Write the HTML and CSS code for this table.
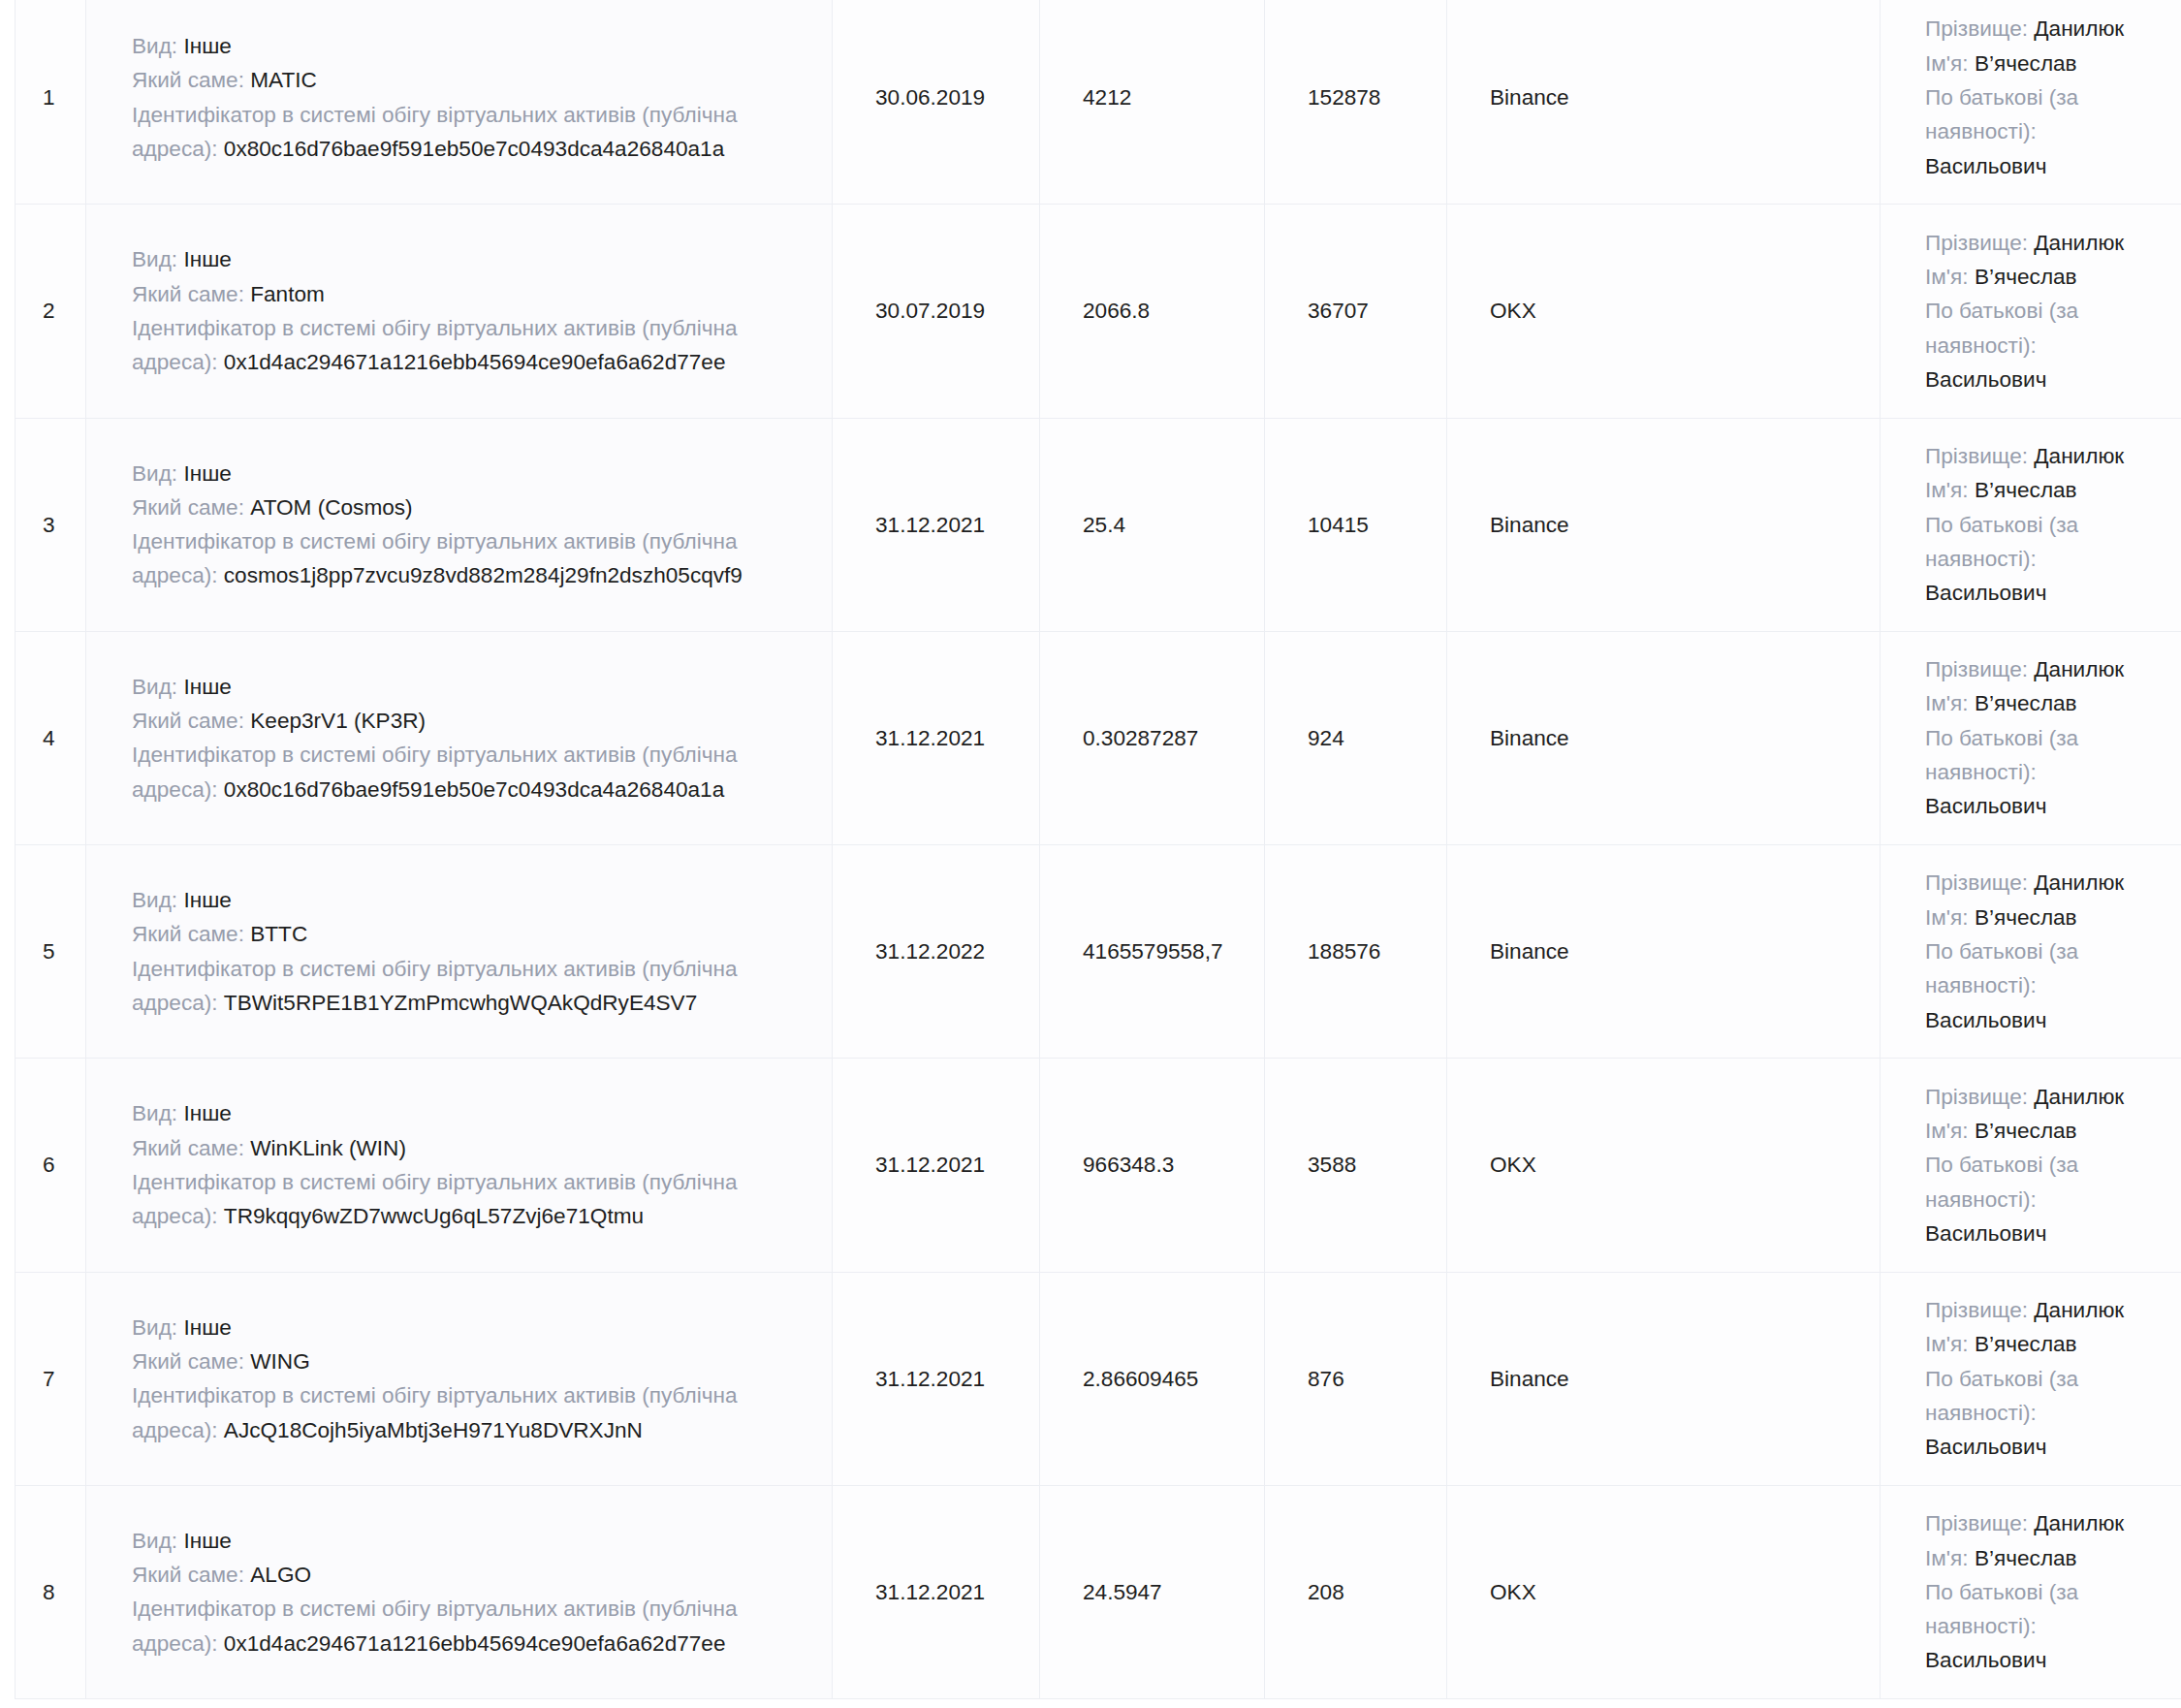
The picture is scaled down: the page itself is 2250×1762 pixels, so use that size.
FILE: index.html
```html
<!DOCTYPE html>
<html lang="uk">
<head>
<meta charset="utf-8">
<title>Віртуальні активи</title>
<link rel="stylesheet" href="styles.css">
</head>
<body>
<div class="viewport">
<table class="assets">
<colgroup>
<col class="c-num"><col class="c-desc"><col class="c-date"><col class="c-amount"><col class="c-value"><col class="c-place"><col class="c-owner">
</colgroup>
<tbody>
<tr>
<td class="num">1</td>
<td class="desc"><div><span class="lbl">Вид:</span> Інше</div><div><span class="lbl">Який саме:</span> MATIC</div><div><span class="lbl">Ідентифікатор в системі обігу віртуальних активів (публічна адреса):</span> 0x80c16d76bae9f591eb50e7c0493dca4a26840a1a</div></td>
<td>30.06.2019</td><td>4212</td><td>152878</td><td>Binance</td>
<td class="owner"><div><span class="lbl">Прізвище:</span> Данилюк</div><div><span class="lbl">Ім'я:</span> В’ячеслав</div><div><span class="lbl">По батькові (за наявності):</span> Васильович</div></td>
</tr>
<tr>
<td class="num">2</td>
<td class="desc"><div><span class="lbl">Вид:</span> Інше</div><div><span class="lbl">Який саме:</span> Fantom</div><div><span class="lbl">Ідентифікатор в системі обігу віртуальних активів (публічна адреса):</span> 0x1d4ac294671a1216ebb45694ce90efa6a62d77ee</div></td>
<td>30.07.2019</td><td>2066.8</td><td>36707</td><td>OKX</td>
<td class="owner"><div><span class="lbl">Прізвище:</span> Данилюк</div><div><span class="lbl">Ім'я:</span> В’ячеслав</div><div><span class="lbl">По батькові (за наявності):</span> Васильович</div></td>
</tr>
<tr>
<td class="num">3</td>
<td class="desc"><div><span class="lbl">Вид:</span> Інше</div><div><span class="lbl">Який саме:</span> ATOM (Cosmos)</div><div><span class="lbl">Ідентифікатор в системі обігу віртуальних активів (публічна адреса):</span> cosmos1j8pp7zvcu9z8vd882m284j29fn2dszh05cqvf9</div></td>
<td>31.12.2021</td><td>25.4</td><td>10415</td><td>Binance</td>
<td class="owner"><div><span class="lbl">Прізвище:</span> Данилюк</div><div><span class="lbl">Ім'я:</span> В’ячеслав</div><div><span class="lbl">По батькові (за наявності):</span> Васильович</div></td>
</tr>
<tr>
<td class="num">4</td>
<td class="desc"><div><span class="lbl">Вид:</span> Інше</div><div><span class="lbl">Який саме:</span> Keep3rV1 (KP3R)</div><div><span class="lbl">Ідентифікатор в системі обігу віртуальних активів (публічна адреса):</span> 0x80c16d76bae9f591eb50e7c0493dca4a26840a1a</div></td>
<td>31.12.2021</td><td>0.30287287</td><td>924</td><td>Binance</td>
<td class="owner"><div><span class="lbl">Прізвище:</span> Данилюк</div><div><span class="lbl">Ім'я:</span> В’ячеслав</div><div><span class="lbl">По батькові (за наявності):</span> Васильович</div></td>
</tr>
<tr>
<td class="num">5</td>
<td class="desc"><div><span class="lbl">Вид:</span> Інше</div><div><span class="lbl">Який саме:</span> BTTC</div><div><span class="lbl">Ідентифікатор в системі обігу віртуальних активів (публічна адреса):</span> TBWit5RPE1B1YZmPmcwhgWQAkQdRyE4SV7</div></td>
<td>31.12.2022</td><td>4165579558,7</td><td>188576</td><td>Binance</td>
<td class="owner"><div><span class="lbl">Прізвище:</span> Данилюк</div><div><span class="lbl">Ім'я:</span> В’ячеслав</div><div><span class="lbl">По батькові (за наявності):</span> Васильович</div></td>
</tr>
<tr>
<td class="num">6</td>
<td class="desc"><div><span class="lbl">Вид:</span> Інше</div><div><span class="lbl">Який саме:</span> WinKLink (WIN)</div><div><span class="lbl">Ідентифікатор в системі обігу віртуальних активів (публічна адреса):</span> TR9kqqy6wZD7wwcUg6qL57Zvj6e71Qtmu</div></td>
<td>31.12.2021</td><td>966348.3</td><td>3588</td><td>OKX</td>
<td class="owner"><div><span class="lbl">Прізвище:</span> Данилюк</div><div><span class="lbl">Ім'я:</span> В’ячеслав</div><div><span class="lbl">По батькові (за наявності):</span> Васильович</div></td>
</tr>
<tr>
<td class="num">7</td>
<td class="desc"><div><span class="lbl">Вид:</span> Інше</div><div><span class="lbl">Який саме:</span> WING</div><div><span class="lbl">Ідентифікатор в системі обігу віртуальних активів (публічна адреса):</span> AJcQ18Cojh5iyaMbtj3eH971Yu8DVRXJnN</div></td>
<td>31.12.2021</td><td>2.86609465</td><td>876</td><td>Binance</td>
<td class="owner"><div><span class="lbl">Прізвище:</span> Данилюк</div><div><span class="lbl">Ім'я:</span> В’ячеслав</div><div><span class="lbl">По батькові (за наявності):</span> Васильович</div></td>
</tr>
<tr>
<td class="num">8</td>
<td class="desc"><div><span class="lbl">Вид:</span> Інше</div><div><span class="lbl">Який саме:</span> ALGO</div><div><span class="lbl">Ідентифікатор в системі обігу віртуальних активів (публічна адреса):</span> 0x1d4ac294671a1216ebb45694ce90efa6a62d77ee</div></td>
<td>31.12.2021</td><td>24.5947</td><td>208</td><td>OKX</td>
<td class="owner"><div><span class="lbl">Прізвище:</span> Данилюк</div><div><span class="lbl">Ім'я:</span> В’ячеслав</div><div><span class="lbl">По батькові (за наявності):</span> Васильович</div></td>
</tr>
</tbody>
</table>
</div>
</body>
</html>
```

FILE: styles.css
```css
html, body {
  margin: 0;
  padding: 0;
  background: #ffffff;
}

.viewport {
  width: 100vw;
  height: 100vh;
  overflow: hidden;
  padding-left: 15px;
  box-sizing: border-box;
}

.assets {
  margin-top: -10px;
  border-collapse: collapse;
  table-layout: fixed;
  width: 2265px;
  font-family: "Liberation Sans", Arial, Helvetica, sans-serif;
  font-size: 22.6px;
  line-height: 35.3px;
  color: #1d1e21;
  background: #fdfdfe;
}

.c-num { width: 73px; }
.c-desc { width: 770px; }
.c-date { width: 214px; }
.c-amount { width: 232px; }
.c-value { width: 188px; }
.c-place { width: 447px; }
.c-owner { width: 341px; }

.assets td {
  border: 1px solid #eceef3;
  padding: 21.4px 46px 21.4px 44px;
  vertical-align: middle;
  text-align: left;
  white-space: nowrap;
}

.assets td.num {
  padding-left: 28px;
  padding-right: 10px;
}

.assets td.desc {
  white-space: normal;
  padding-left: 47px;
  padding-right: 46px;
  background: #fbfbfd;
}

.assets td.owner {
  white-space: normal;
  padding-left: 46px;
  padding-right: 70px;
}

.lbl {
  color: #979dac;
}
```
